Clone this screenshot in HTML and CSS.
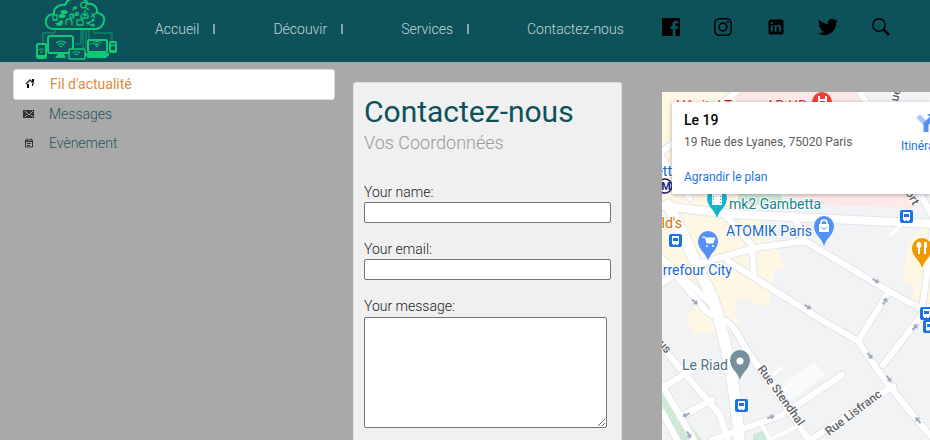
FILE: index.html
```html
<!DOCTYPE html>
<html lang="fr">
<head>
<meta charset="utf-8">
<meta name="viewport" content="width=device-width, initial-scale=1">
<title>Contactez-nous</title>
<link rel="stylesheet" href="styles.css">
</head>
<body>
<header class="topbar">
  <a class="logo" href="#" aria-label="Accueil du site">
    <svg viewBox="0 0 84 62" width="84" height="62" fill="none" stroke="#0fc878">
      <g stroke="#0c9c6b" stroke-width="1">
        <path d="M20 29v4H8v10M46 30v14h-6M48 30v18M51 30v18M54 30v14h6M59 30v3h18v8"/>
      </g>
      <path stroke-width="2" stroke-linejoin="round" d="M19 29C12 29 10 24 11 20C12 16 15 14 19 14C18 8 24 4 30 5C33-4 49-5 53 4C59 3 63 8 62 13C67 13 70 17 69 21C68 26 65 29 60 29Z"/>
      <g stroke-width="1.300">
        <circle cx="48.500" cy="5" r="2.800"/><path d="M50 7l4 3"/>
        <path d="M37 10l5-2M38 8l4-1M37 16l5-2M50 10v6m-3-3 3 3 3-3M46 15v3h7v-3M18 15h4v5h-4zM31 25v-3a3 3 0 0 1 6 0v3M42 20h6v5h-6zM53 23l6-3M53 23l5 3M56 17l6-5M57 13l3 5"/>
        <circle cx="37" cy="16" r="2"/><circle cx="42" cy="14" r="1.500"/>
      </g>
      <g fill="#0fc878" stroke="none"><ellipse cx="29" cy="12" rx="3.500" ry="2"/><ellipse cx="27" cy="16" rx="3.500" ry="2"/><path d="M20 23c4 1 4-3 8-3l-1 5c-3 2-5 1-7-2z"/><circle cx="53" cy="23" r="1.500"/><circle cx="58" cy="20" r="1.500"/><circle cx="58" cy="25" r="1.500"/></g>
      <g stroke-width="2" stroke-linejoin="round">
        <rect x="13" y="36" width="25" height="17" rx="2"/>
        <rect x="2" y="44" width="9" height="14" rx="1"/>
        <rect x="53" y="40" width="19" height="12" rx="1"/>
        <rect x="75" y="42" width="6" height="10" rx="1"/>
      </g>
      <path fill="#0fc878" stroke="none" d="M23 54h6l2 4H20zM50 53h24v2l-3 3H53l-3-3zM3 55h7v2H3zM75 50h6v2h-6z"/>
      <rect x="34" y="49" width="16" height="10" rx="1" fill="#0d525b" stroke-width="1.600"/>
      <g stroke-width="1.200">
        <path d="M21 43q5-4 10 0M23 45q3-3 6 0M25 47q1-2 2 0M58 43q4-3 8 0M60 45q2-2 4 0M61 47q1-2 2 0M38 53q3-3 7 0M40 55q1-2 3 0M4 50q2-2 5 0M5 52h3M76 46q2-2 4 0"/>
      </g>
    </svg>
  </a>
  <nav aria-label="Navigation principale">
    <ul class="menu">
      <li><a href="#">Accueil</a></li>
      <li><a href="#">Découvir</a></li>
      <li><a href="#">Services</a></li>
      <li><a href="#">Contactez-nous</a></li>
    </ul>
  </nav>
  <div class="social">
    <a href="#" aria-label="Facebook"><svg viewBox="0 0 18 18" width="18" height="18"><path d="M1 0h16a1 1 0 0 1 1 1v16a1 1 0 0 1-1 1h-3.500v-7h2.300l.4-2.700h-2.700V6.600c0-.8.3-1.300 1.400-1.300h1.400V2.900l-2-.1c-2.600 0-3.900 1.200-3.900 3.400v2.100H8.400V11h2.300v7H1a1 1 0 0 1-1-1V1a1 1 0 0 1 1-1z"/></svg></a>
    <a href="#" aria-label="Instagram"><svg viewBox="0 0 18 18" width="18" height="18" fill="none" stroke="#000" stroke-width="1.600"><rect x=".8" y=".8" width="16.400" height="16.400" rx="4.500"/><circle cx="9" cy="9" r="3.900"/><circle cx="13.800" cy="4.200" r="1.100" fill="#000" stroke="none"/></svg></a>
    <a href="#" aria-label="LinkedIn"><svg viewBox="-2 0 18 18" width="18" height="18"><path fill-rule="evenodd" d="M3 1.500h10a2.500 2.500 0 0 1 2.500 2.500v10a2.500 2.500 0 0 1-2.500 2.500H3A2.500 2.500 0 0 1 .5 14V4A2.500 2.500 0 0 1 3 1.500zM2.800 7v6.700h2V7zm0-3v2h2V4zM6.500 7v6.700h2V10c0-2 2.700-2.200 2.700 0v3.700h2V9.500c0-3-3.200-3.500-4.700-1.600V7z"/></svg></a>
    <a href="#" aria-label="Twitter"><svg viewBox="0 0 24 24" width="20" height="20"><path d="M24 4.600a10 10 0 0 1-2.800.8 5 5 0 0 0 2.100-2.700 10 10 0 0 1-3.100 1.200 4.900 4.900 0 0 0-8.400 4.500A14 14 0 0 1 1.700 3.200a4.900 4.900 0 0 0 1.500 6.600 5 5 0 0 1-2.200-.7 4.900 4.900 0 0 0 3.900 4.900 5 5 0 0 1-2.200.1 4.900 4.900 0 0 0 4.600 3.400A10 10 0 0 1 0 19.500 14 14 0 0 0 21.500 7.100 10 10 0 0 0 24 4.600z"/></svg></a>
    <a href="#" aria-label="Rechercher"><svg viewBox="0 0 18 18" width="18" height="18" fill="none" stroke="#000"><circle cx="7" cy="7" r="6.200" stroke-width="1.400"/><path d="M11.500 11.500l5.500 5.500" stroke-width="2.400"/></svg></a>
  </div>
</header>

<main class="page">
  <nav class="side" aria-label="Rubriques">
    <a class="side-link active" href="#"><svg viewBox="0 0 12 12" width="12" height="12"><path d="M2 6l4-4 4 4" fill="none" stroke="#222" stroke-width="1.300"/><path d="M8 1h2v3H8zM3 6h2v4H3zM8 6h1v2H8z"/></svg>Fil d'actualité</a>
    <a class="side-link" href="#"><svg viewBox="0 0 12 12" width="12" height="12"><path d="M0 2h11v8H0z" fill="#333"/><path d="M2 3l4 4 4-4M2 9l2-2M10 9L8 7" stroke="#aaa" fill="none"/></svg>Messages</a>
    <a class="side-link" href="#"><svg viewBox="0 0 12 12" width="12" height="12" fill="none" stroke="#333"><path d="M2.500 3v7h7V3zM2 4.500h8M4 1.500v2M8 1.500v2M4 6.500h4M4 8.500h3"/></svg>Evènement</a>
  </nav>

  <section class="card">
    <h1>Contactez-nous</h1>
    <h2>Vos Coordonnées</h2>
    <form>
      <div class="field"><label for="name">Your name:</label><input id="name" type="text"></div>
      <div class="field"><label for="email">Your email:</label><input id="email" type="email"></div>
      <div class="field"><label for="message">Your message:</label><textarea id="message"></textarea></div>
    </form>
  </section>

  <section class="map" aria-label="Plan">
    <svg class="map-canvas" viewBox="662 92 268 348" preserveAspectRatio="xMinYMin slice">
      <defs>
        <path id="pin" d="M0 20C-2 12-10 9-10 0a10 10 0 0 1 20 0C10 9 2 12 0 20z"/>
        <g id="bus"><rect x="-6" y="-6" width="13" height="13" rx="2" fill="#1a73e8"/><path fill="#fff" fill-rule="evenodd" d="M-3-4h7v8H3v1H1V4H0v1h-2V4h-1zM-2-2v3h5v-3z"/></g>
        <path id="arrow" d="M-4-1h4v-2l4 3-4 3V1h-4z" fill="#a3a8bd"/>
      </defs>
      <rect x="662" y="92" width="400" height="450" fill="#f1f3f4"/>
      <path fill="#fef7e4" d="M662 92h80l16 100 3 50 13-3 10 28-10 5-5 35-31-10-5 22-15 6-35-35-21-22z"/>
      <path fill="#fef7e4" d="M686 320l12-18 14-2 27 18-2 12-20 4-17-2-5 4zM908 242l15-15h40v105l-22-16-30-14 4-14-12-6z"/>
      <path fill="#fce8e6" d="M732 92h125l55 100v16l-110-4-24-12z"/>
      <path fill="#f1f3f4" d="M860 92h102v118l-48-4z"/>
      <path fill="#ceead6" d="M738 194h43l4 12-46-2z"/>
      <path fill="#fff" opacity=".6" d="M782 385l32-23 11 13-40 30z"/>
      <path fill="#ceead6" d="M662 390l40 50h-22l-18-35zM753 434l10-3 4 9h-14z"/>
      <g fill="none" stroke-linecap="round" stroke-linejoin="round">
        <g stroke="#e3e6ec" stroke-width="8">
          <path d="M655 205l75 9 205 10" stroke-width="10"/>
          <path d="M668 205q14 25 32 68 14 23 19 47 15 50 20 120" stroke-width="13"/>
          <path d="M655 148l35 50M736 92l-74 60M860 92l24 40M894 92l25 100 20 35"/>
          <path d="M725 215l27 30 2 30M793 215l13 27M697 264l58-16 50-7 80 48 45 25M728 261l92 58q24 14 38 22 25 40 72 94"/>
          <path d="M655 252l60 55M655 288l20-14 32 38 14 8M718 320q12-4 26 26l65 94M662 347l58 68 8 25M662 388l30-18M680 417l32-17M662 385l32 55M712 440l70-25 60-40M807 442l86-56M858 341l28-45M883 365l45-58M922 310l12-90M662 412l15 28"/>
        </g>
        <g stroke="#fff" stroke-width="6">
          <path d="M655 205l75 9 205 10" stroke-width="8"/>
          <path d="M668 205q14 25 32 68 14 23 19 47 15 50 20 120" stroke-width="11"/>
          <path d="M655 148l35 50M736 92l-74 60M860 92l24 40M894 92l25 100 20 35"/>
          <path d="M725 215l27 30 2 30M793 215l13 27M697 264l58-16 50-7 80 48 45 25M728 261l92 58q24 14 38 22 25 40 72 94"/>
          <path d="M655 252l60 55M655 288l20-14 32 38 14 8M718 320q12-4 26 26l65 94M662 347l58 68 8 25M662 388l30-18M680 417l32-17M662 385l32 55M712 440l70-25 60-40M807 442l86-56M858 341l28-45M883 365l45-58M922 310l12-90M662 412l15 28"/>
        </g>
        <path stroke="#fff" stroke-width="3" d="M891 235l12-12M774 374l8-6M784 390l6-5M762 425l8 15M773 438l25-12"/>
      </g>
      <use href="#arrow" transform="translate(695 302) rotate(40)"/>
      <use href="#arrow" transform="translate(808 307) rotate(30)"/>
      <use href="#arrow" transform="translate(876 281) rotate(30)"/>
      <use href="#arrow" transform="translate(885 301) rotate(-58)"/>
      <use href="#arrow" transform="translate(870 356) rotate(50)"/>
      <use href="#arrow" transform="translate(889 379) rotate(55)"/>
      <use href="#arrow" transform="translate(915 327) rotate(-50)"/>
      <use href="#arrow" transform="translate(771 417) rotate(-20)"/>
      <use href="#arrow" transform="translate(918 420) rotate(-130)"/>
      <use href="#arrow" transform="translate(686 415) rotate(155)"/>
      <use href="#arrow" transform="translate(689 435) rotate(60)"/>
      <g class="map-labels">
        <text x="676" y="111" fill="#d93025">Hôpital Tenon AP-HP</text>
        <text x="672" y="176" text-anchor="end" fill="#1967d2">ett</text>
        <text x="729" y="209" fill="#12858d">mk2 Gambetta</text>
        <text x="812" y="236" text-anchor="end" fill="#1967d2">ATOMIK Paris</text>
        <text x="682" y="228" text-anchor="end" fill="#d56e0c">ld's</text>
        <text x="732" y="275" text-anchor="end" fill="#1967d2">rrefour City</text>
        <text x="728" y="370" text-anchor="end" fill="#546e7a">Le Riad</text>
        <g class="streets">
          <text transform="translate(757 369) rotate(54)">Rue Stendhal</text>
          <text transform="translate(829 436) rotate(-37)">Rue Lisfranc</text>
          <text transform="translate(666 354) rotate(50)" text-anchor="end">us</text>
          <text transform="translate(898 102) rotate(-78)">ue</text>
          <text transform="translate(913 206) rotate(60)" text-anchor="end">ort</text>
        </g>
      </g>
      <g fill="#ea4335"><use href="#pin" x="822" y="102"/></g>
      <path d="M819 96v9M826 96v9M819 100h7" stroke="#fff" stroke-width="2"/>
      <g fill="#12b5cb"><use href="#pin" x="717" y="198"/></g>
      <path fill="#fff" fill-rule="evenodd" d="M712 194h10v11h-10zm1 2v1h1v-1zm0 3v1h1v-1zm0 3v1h1v-1zm7-6v1h1v-1zm0 3v1h1v-1zm0 3v1h1v-1z"/>
      <g fill="#5491f5"><use href="#pin" x="708" y="241"/><use href="#pin" x="824" y="226"/></g>
      <path d="M702 237h3l2 6h6l2-5h-9" fill="#fff" stroke="#fff"/><circle cx="707" cy="246" r="1" fill="#fff"/><circle cx="713" cy="246" r="1" fill="#fff"/>
      <path d="M819 224h10v8h-10z" fill="#fff"/><path d="M821 224v-1a3 3 0 0 1 6 0v1" fill="none" stroke="#fff" stroke-width="1.500"/><path d="M821 227q3 4 6 0" fill="none" stroke="#5491f5"/>
      <g fill="#f29900"><use href="#pin" x="922" y="248"/></g>
      <path d="M919 243v11M925 243v11" stroke="#fff" stroke-width="2"/><ellipse cx="919" cy="245" rx="2.500" ry="3" fill="#fff"/><path d="M924 242h3v6h-3z" fill="#fff"/>
      <g fill="#78909c"><use href="#pin" x="740" y="360"/></g><circle cx="740" cy="361" r="3.500" fill="#fff"/>
      <use href="#bus" x="675" y="240"/><use href="#bus" x="906" y="216"/><use href="#bus" x="741" y="405"/><use href="#bus" x="926" y="313"/><use href="#bus" x="929" y="326"/>
      <circle cx="665" cy="186" r="7" fill="#fff" stroke="#1a237e" stroke-width="1.500"/>
      <text class="metro" x="666" y="190" text-anchor="middle">M</text>
    </svg>
    <div class="place">
      <div class="place-text">
        <strong>Le 19</strong>
        <span>19 Rue des Lyanes, 75020 Paris</span>
        <a href="#">Agrandir le plan</a>
      </div>
      <a class="route" href="#"><svg viewBox="0 0 22 22" width="22" height="22" fill="none" stroke-width="5"><path d="M2 4l8 8" stroke="#a8c7fa"/><path d="M10 20v-8l7-7" stroke="#5491f5"/><path d="M11 2h9v9z" fill="#5491f5"/></svg>Itinéraires</a>
    </div>
  </section>
</main>
</body>
</html>
```
FILE: styles.css
```css
* { box-sizing: border-box; }

body {
  margin: 0;
  height: 100vh;
  display: flex;
  flex-direction: column;
  overflow: hidden;
  background: #a9a9a9;
  color: #222;
  font: 300 14px/18px Roboto, sans-serif;
}

a { color: inherit; text-decoration: none; }
svg { display: block; flex: none; }

.topbar {
  flex: none;
  display: flex;
  align-items: center;
  height: 62px;
  padding-left: 35px;
  background: #0d525b;
}

.logo { margin-right: 36px; }

.menu {
  display: flex;
  margin: 0;
  padding: 0 0 4px;
  list-style: none;
  color: #c3d4d6;
}
.menu li { display: flex; align-items: center; }
.menu li:not(:last-child)::after {
  content: "";
  width: 2px;
  height: 10px;
  margin: 0 58px 0 14px;
  background: #86a8ad;
}

.social {
  display: flex;
  align-items: center;
  gap: 34px;
  margin-left: 38px;
  padding-bottom: 8px;
}

.page {
  flex: 1;
  display: flex;
  align-items: flex-start;
  min-height: 0;
}

.side {
  width: 322px;
  flex: none;
  margin: 7px 18px 0 13px;
}
.side-link {
  display: flex;
  align-items: center;
  gap: 14px;
  height: 29px;
  padding: 0 10px 2px;
  color: #26535a;
}
.side-link.active {
  height: 31px;
  border: 1px solid #ddd;
  border-radius: 3px;
  background: #fff;
  color: #d98b3c;
  font-weight: 400;
}

.card {
  flex: none;
  width: 269px;
  margin-top: 20px;
  padding: 10px;
  border: 1px solid #ddd;
  border-radius: 3px;
  background: #f0f0f0;
}
.card h1 {
  margin: 0;
  color: #0d525b;
  font-size: 30px;
  line-height: 38px;
  font-weight: 400;
}
.card h2 {
  margin: 0 0 28px;
  color: #999;
  font-size: 18px;
  line-height: 24px;
  font-weight: 300;
}
.field { margin-bottom: 17px; }
.field label { display: block; line-height: 18px; }
.field input,
.field textarea {
  display: block;
  width: 247px;
  height: 21px;
  border: 1px solid #767676;
  border-radius: 2px;
  background: #fff;
}
.field input { margin-top: 1px; }
.field textarea { width: 243px; height: 111px; margin-top: 2px; }

.map {
  position: relative;
  flex: 1;
  min-width: 0;
  align-self: stretch;
  overflow: hidden;
  margin: 30px 0 0 40px;
}
.map-canvas { width: 100%; height: 100%; }
.map-labels {
  font: 400 14px Roboto, sans-serif;
  paint-order: stroke;
  stroke: #fff;
  stroke-width: 2px;
  stroke-linejoin: round;
}
.streets { font-size: 12px; font-weight: 500; fill: #5f6368; }
.metro { font: 700 11px Roboto, sans-serif; fill: #1a237e; }

.place {
  position: absolute;
  top: 10px;
  left: 10px;
  right: 0;
  display: flex;
  height: 92px;
  padding: 10px 0 10px 12px;
  border-radius: 2px 0 0 2px;
  background: #fff;
  box-shadow: 0 1px 4px rgba(0, 0, 0, 0.3);
  font-size: 12px;
  line-height: 16px;
  font-weight: 400;
}
.place-text { flex: none; width: 217px; color: #5b5b5b; }
.place-text strong {
  display: block;
  margin-bottom: 6px;
  color: #000;
  font-size: 14px;
  font-weight: 500;
}
.place-text span { display: block; margin-bottom: 19px; }
.place a { color: #1a73e8; }
.route {
  flex: none;
  display: flex;
  flex-direction: column;
  align-items: center;
  gap: 4px;
}
```
